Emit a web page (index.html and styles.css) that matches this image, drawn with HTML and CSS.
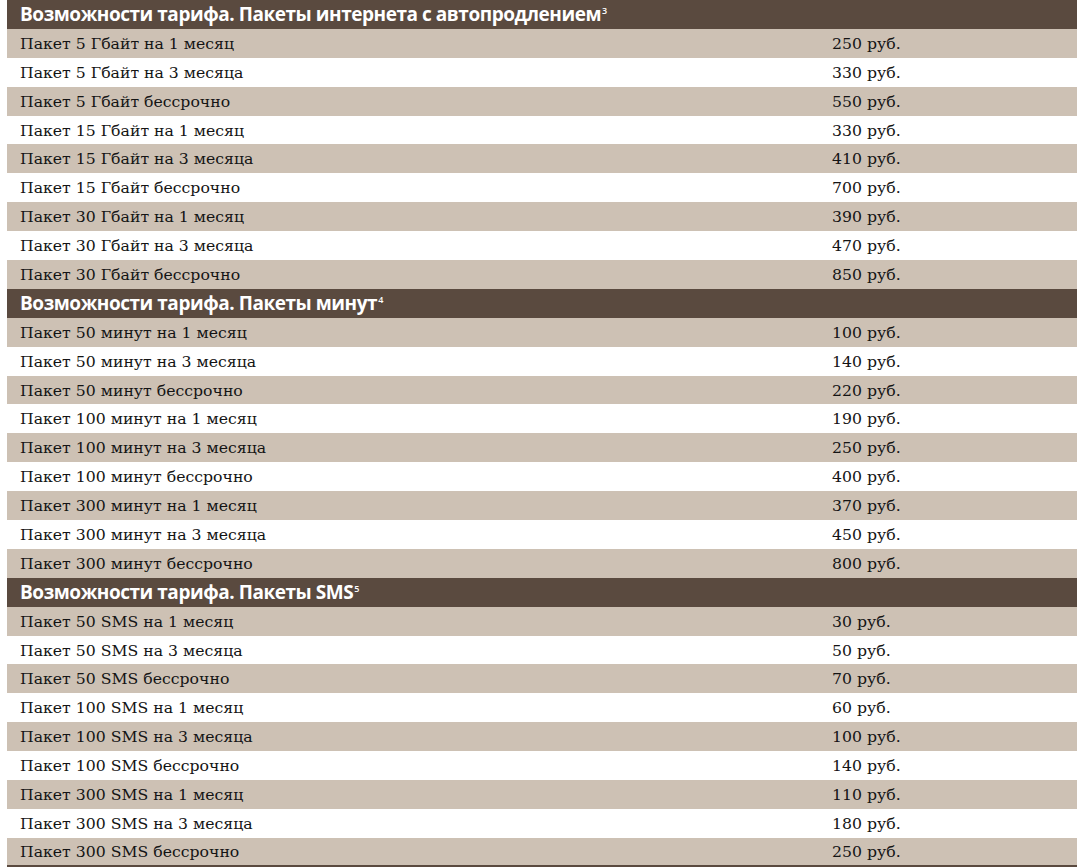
FILE: index.html
```html
<!DOCTYPE html>
<html lang="ru">
<head>
<meta charset="utf-8">
<link rel="stylesheet" href="styles.css">
</head>
<body>
<div class="table">
  <div class="head">Возможности тарифа. Пакеты интернета с автопродлением<sup>3</sup></div>
  <div class="row alt"><span class="name">Пакет 5 Гбайт на 1 месяц</span><span class="price">250 руб.</span></div>
  <div class="row"><span class="name">Пакет 5 Гбайт на 3 месяца</span><span class="price">330 руб.</span></div>
  <div class="row alt"><span class="name">Пакет 5 Гбайт бессрочно</span><span class="price">550 руб.</span></div>
  <div class="row"><span class="name">Пакет 15 Гбайт на 1 месяц</span><span class="price">330 руб.</span></div>
  <div class="row alt"><span class="name">Пакет 15 Гбайт на 3 месяца</span><span class="price">410 руб.</span></div>
  <div class="row"><span class="name">Пакет 15 Гбайт бессрочно</span><span class="price">700 руб.</span></div>
  <div class="row alt"><span class="name">Пакет 30 Гбайт на 1 месяц</span><span class="price">390 руб.</span></div>
  <div class="row"><span class="name">Пакет 30 Гбайт на 3 месяца</span><span class="price">470 руб.</span></div>
  <div class="row alt"><span class="name">Пакет 30 Гбайт бессрочно</span><span class="price">850 руб.</span></div>
  <div class="head">Возможности тарифа. Пакеты минут<sup>4</sup></div>
  <div class="row alt"><span class="name">Пакет 50 минут на 1 месяц</span><span class="price">100 руб.</span></div>
  <div class="row"><span class="name">Пакет 50 минут на 3 месяца</span><span class="price">140 руб.</span></div>
  <div class="row alt"><span class="name">Пакет 50 минут бессрочно</span><span class="price">220 руб.</span></div>
  <div class="row"><span class="name">Пакет 100 минут на 1 месяц</span><span class="price">190 руб.</span></div>
  <div class="row alt"><span class="name">Пакет 100 минут на 3 месяца</span><span class="price">250 руб.</span></div>
  <div class="row"><span class="name">Пакет 100 минут бессрочно</span><span class="price">400 руб.</span></div>
  <div class="row alt"><span class="name">Пакет 300 минут на 1 месяц</span><span class="price">370 руб.</span></div>
  <div class="row"><span class="name">Пакет 300 минут на 3 месяца</span><span class="price">450 руб.</span></div>
  <div class="row alt"><span class="name">Пакет 300 минут бессрочно</span><span class="price">800 руб.</span></div>
  <div class="head">Возможности тарифа. Пакеты SMS<sup>5</sup></div>
  <div class="row alt"><span class="name">Пакет 50 SMS на 1 месяц</span><span class="price">30 руб.</span></div>
  <div class="row"><span class="name">Пакет 50 SMS на 3 месяца</span><span class="price">50 руб.</span></div>
  <div class="row alt"><span class="name">Пакет 50 SMS бессрочно</span><span class="price">70 руб.</span></div>
  <div class="row"><span class="name">Пакет 100 SMS на 1 месяц</span><span class="price">60 руб.</span></div>
  <div class="row alt"><span class="name">Пакет 100 SMS на 3 месяца</span><span class="price">100 руб.</span></div>
  <div class="row"><span class="name">Пакет 100 SMS бессрочно</span><span class="price">140 руб.</span></div>
  <div class="row alt"><span class="name">Пакет 300 SMS на 1 месяц</span><span class="price">110 руб.</span></div>
  <div class="row"><span class="name">Пакет 300 SMS на 3 месяца</span><span class="price">180 руб.</span></div>
  <div class="row alt last"><span class="name">Пакет 300 SMS бессрочно</span><span class="price">250 руб.</span></div>
</div>
</body>
</html>
```

FILE: styles.css
```css
html, body {
  margin: 0;
  padding: 0;
  background: #ffffff;
}
.table {
  margin-left: 7px;
  width: 1070px;
  display: flex;
  flex-direction: column;
}
.head {
  height: 28.9px;
  box-sizing: border-box;
  background: #5a4a3f;
  color: #ffffff;
  font-family: "Open Sans", "Noto Sans", sans-serif;
  font-weight: 700;
  font-size: 19px;
  letter-spacing: -0.45px;
  padding-left: 13px;
  display: flex;
  align-items: center;
  white-space: nowrap;
}
.head sup {
  font-size: 9px;
  font-weight: 600;
  align-self: flex-start;
  margin-top: 4px;
  margin-left: 1px;
  letter-spacing: 0;
}
.row {
  height: 28.9px;
  box-sizing: border-box;
  display: flex;
  align-items: center;
  font-family: "DejaVu Serif", "Liberation Serif", serif;
  font-size: 15.7px;
  color: #141414;
  white-space: nowrap;
}
.row.alt {
  background: #cdc1b4;
}
.row.last {
  border-bottom: 2px solid #5a4a3f;
}
.name {
  padding-left: 13px;
  width: 812px;
}
.price {
  flex: 1;
}
```
